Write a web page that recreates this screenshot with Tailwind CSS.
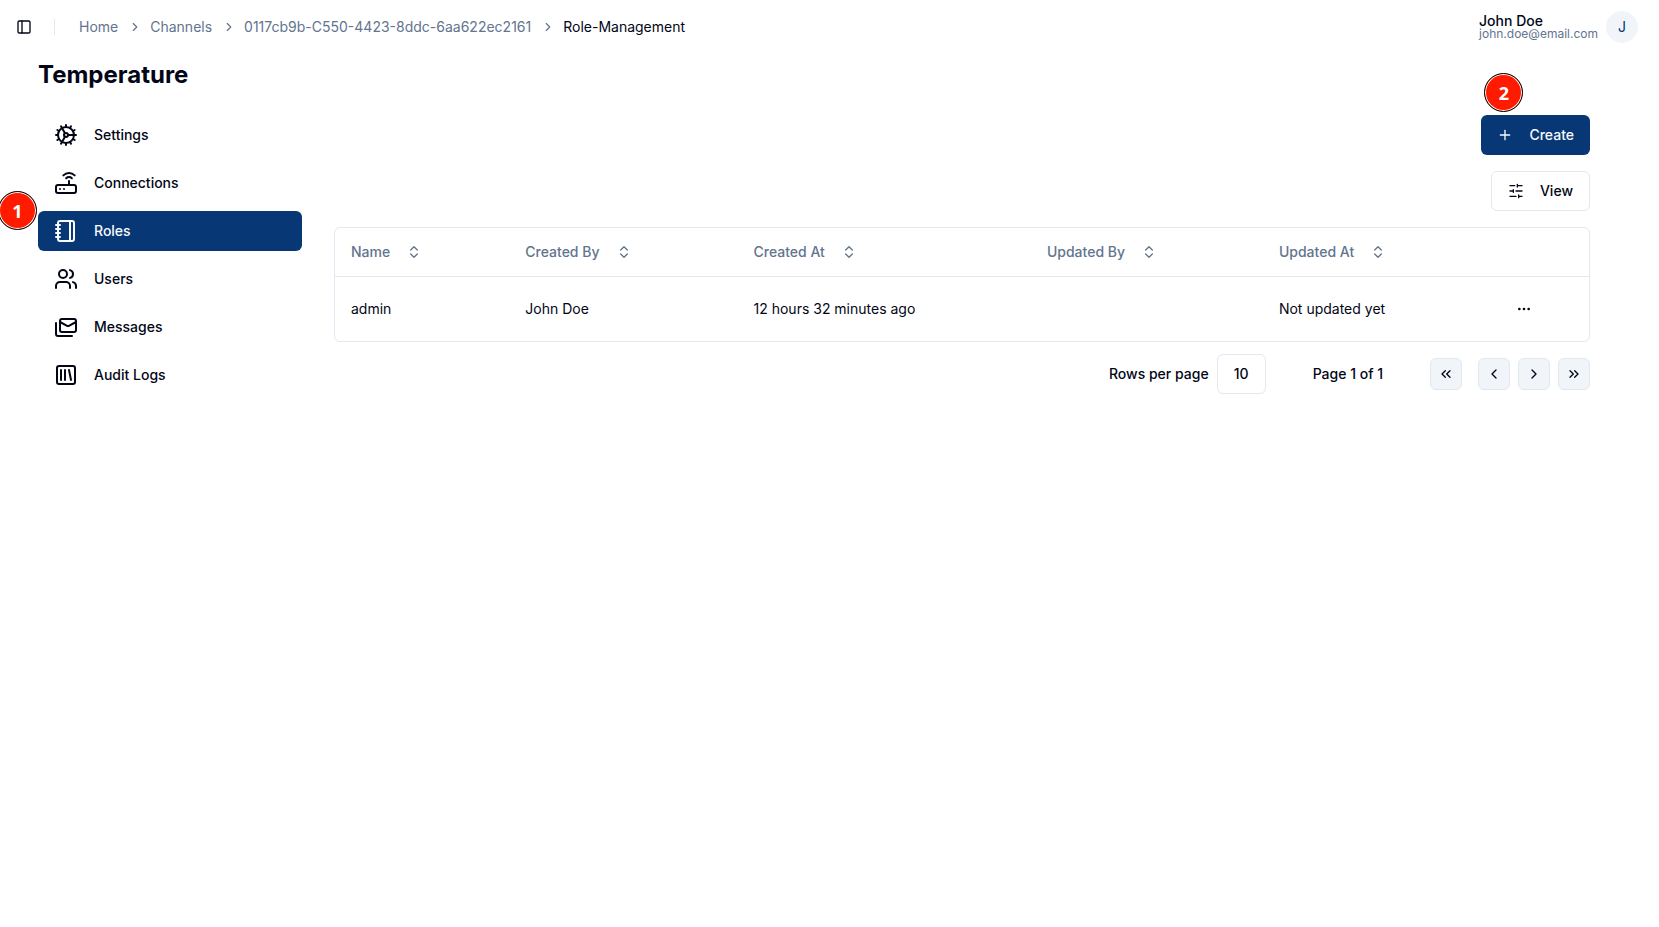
<!DOCTYPE html>
<html lang="en">
<head>
<meta charset="utf-8">
<meta name="viewport" content="width=device-width, initial-scale=1">
<title>Role Management</title>
<script src="https://cdn.jsdelivr.net/npm/@tailwindcss/browser@4"></script>
</head>
<body class="relative min-h-screen bg-white font-['Inter',sans-serif] text-sm text-[#020617]">
<svg class="hidden" xmlns="http://www.w3.org/2000/svg">
  <symbol id="chevron-right" viewBox="0 0 24 24"><path d="m9 18 6-6-6-6"/></symbol>
  <symbol id="sort" viewBox="0 0 24 24"><path d="m7 15 5 5 5-5"/><path d="m7 9 5-5 5 5"/></symbol>
</svg>

<header class="flex h-[54px] items-center justify-between pr-[21px] pl-4">
  <div class="flex items-center">
    <button type="button" aria-label="Toggle sidebar" class="flex size-4 items-center justify-center">
      <svg class="size-4" viewBox="0 0 24 24" fill="none" stroke="currentColor" stroke-width="2" stroke-linecap="round" stroke-linejoin="round"><rect width="18" height="18" x="3" y="3" rx="2"/><path d="M9 3v18"/></svg>
    </button>
    <div class="ml-[22px] h-4 w-px bg-slate-200"></div>
    <nav aria-label="Breadcrumb" class="ml-6">
      <ol class="flex items-center gap-2 text-slate-500">
        <li><a href="#">Home</a></li>
        <li aria-hidden="true" class="pl-0.5"><svg class="size-3.5 fill-none stroke-current stroke-2" stroke-linecap="round" stroke-linejoin="round"><use href="#chevron-right"/></svg></li>
        <li><a href="#">Channels</a></li>
        <li aria-hidden="true" class="pl-0.5"><svg class="size-3.5 fill-none stroke-current stroke-2" stroke-linecap="round" stroke-linejoin="round"><use href="#chevron-right"/></svg></li>
        <li><a href="#">0117cb9b-C550-4423-8ddc-6aa622ec2161</a></li>
        <li aria-hidden="true" class="pl-0.5"><svg class="size-3.5 fill-none stroke-current stroke-2" stroke-linecap="round" stroke-linejoin="round"><use href="#chevron-right"/></svg></li>
        <li class="text-[#020617]" aria-current="page">Role-Management</li>
      </ol>
    </nav>
  </div>
  <div class="flex items-center gap-2">
    <div>
      <p class="text-sm leading-[14px] font-medium">John Doe</p>
      <p class="text-xs leading-3 text-slate-500">john.doe@email.com</p>
    </div>
    <div class="flex size-8 items-center justify-center rounded-full bg-slate-100 text-[#083776]">J</div>
  </div>
</header>

<main class="pr-[69px] pl-[38px]">
  <h1 class="mt-[5px] text-2xl leading-8 font-bold">Temperature</h1>
  <div class="mt-6 flex gap-8">
    <nav aria-label="Channel" class="flex w-[264px] shrink-0 flex-col gap-2 font-medium">
      <a href="#" class="flex h-10 items-center gap-4 rounded-md px-4">
        <svg class="size-6" viewBox="0 0 24 24" fill="none" stroke="currentColor" stroke-width="2" stroke-linecap="round" stroke-linejoin="round"><path d="M12 20a8 8 0 1 0 0-16 8 8 0 0 0 0 16Z"/><path d="M12 14a2 2 0 1 0 0-4 2 2 0 0 0 0 4Z"/><path d="M12 2v2"/><path d="M12 22v-2"/><path d="m17 20.66-1-1.73"/><path d="M11 10.27 7 3.34"/><path d="m20.66 17-1.73-1"/><path d="m3.34 7 1.73 1"/><path d="M14 12h8"/><path d="M2 12h2"/><path d="m20.66 7-1.73 1"/><path d="m3.34 17 1.73-1"/><path d="m17 3.34-1 1.73"/><path d="m11 13.73-4 6.93"/></svg>
        Settings
      </a>
      <a href="#" class="flex h-10 items-center gap-4 rounded-md px-4">
        <svg class="size-6" viewBox="0 0 24 24" fill="none" stroke="currentColor" stroke-width="2" stroke-linecap="round" stroke-linejoin="round"><rect width="20" height="8" x="2" y="14" rx="2"/><path d="M6.01 18H6"/><path d="M10.01 18H10"/><path d="M15 10v4"/><path d="M17.84 7.17a4 4 0 0 0-5.66 0"/><path d="M20.66 4.34a8 8 0 0 0-11.31 0"/></svg>
        Connections
      </a>
      <a href="#" aria-current="page" class="flex h-10 items-center gap-4 rounded-md bg-[#083776] px-4 text-slate-50">
        <svg class="size-6" viewBox="0 0 24 24" fill="none" stroke="currentColor" stroke-width="2" stroke-linecap="round" stroke-linejoin="round"><path d="M2 6h4"/><path d="M2 10h4"/><path d="M2 14h4"/><path d="M2 18h4"/><rect width="16" height="20" x="4" y="2" rx="2"/><path d="M16 2v20"/></svg>
        Roles
      </a>
      <a href="#" class="flex h-10 items-center gap-4 rounded-md px-4">
        <svg class="size-6" viewBox="0 0 24 24" fill="none" stroke="currentColor" stroke-width="2" stroke-linecap="round" stroke-linejoin="round"><path d="M16 21v-2a4 4 0 0 0-4-4H6a4 4 0 0 0-4 4v2"/><circle cx="9" cy="7" r="4"/><path d="M22 21v-2a4 4 0 0 0-3-3.87"/><path d="M16 3.13a4 4 0 0 1 0 7.75"/></svg>
        Users
      </a>
      <a href="#" class="flex h-10 items-center gap-4 rounded-md px-4">
        <svg class="size-6" viewBox="0 0 24 24" fill="none" stroke="currentColor" stroke-width="2" stroke-linecap="round" stroke-linejoin="round"><rect width="16" height="13" x="6" y="4" rx="2"/><path d="m22 7-7.1 3.78c-.57.3-1.23.3-1.8 0L6 7"/><path d="M2 8v11c0 1.1.9 2 2 2h14"/></svg>
        Messages
      </a>
      <a href="#" class="flex h-10 items-center gap-4 rounded-md px-4">
        <svg class="size-6" viewBox="0 0 24 24" fill="none" stroke="currentColor" stroke-width="2" stroke-linecap="round" stroke-linejoin="round"><rect width="18" height="18" x="3" y="3" rx="2"/><path d="M7 7v10"/><path d="M11 7v10"/><path d="m15 7 2 10"/></svg>
        Audit Logs
      </a>
    </nav>

    <section class="flex min-w-0 flex-1 flex-col" aria-label="Roles">
      <div class="flex flex-col items-end gap-4">
        <div class="relative">
          <button type="button" class="flex h-10 items-center gap-4 rounded-md bg-[#083776] px-4 font-medium text-slate-50">
            <svg class="size-4" viewBox="0 0 24 24" fill="none" stroke="currentColor" stroke-width="2" stroke-linecap="round" stroke-linejoin="round"><path d="M5 12h14"/><path d="M12 5v14"/></svg>
            Create
          </button>
          <span class="absolute -top-[42px] left-[3px] flex size-[39px] items-center justify-center rounded-full border border-black bg-[#ff1a00] font-['Open_Sans',sans-serif] text-lg font-bold text-white ring-1 ring-white ring-inset">2</span>
        </div>
        <button type="button" class="flex h-10 items-center gap-4 rounded-md border border-slate-200 px-4 font-medium">
          <svg class="size-4" viewBox="0 0 24 24" fill="none" stroke="currentColor" stroke-width="2" stroke-linecap="round" stroke-linejoin="round"><path d="M21 4h-7M10 4H3M21 12h-9M8 12H3M21 20h-5M12 20H3M14 2v4M8 10v4M16 18v4"/></svg>
          View
        </button>
      </div>

      <div class="mt-4 rounded-md border border-slate-200">
        <table class="w-full table-fixed text-left">
          <colgroup>
            <col class="w-[13.9%]"><col class="w-[18.2%]"><col class="w-[23.4%]"><col class="w-[18.5%]"><col class="w-[18.3%]"><col>
          </colgroup>
          <thead class="border-b border-slate-200 text-slate-500">
            <tr class="h-12">
              <th class="px-4 font-medium"><button type="button" class="flex items-center gap-4">Name<svg class="size-4 fill-none stroke-current stroke-2" stroke-linecap="round" stroke-linejoin="round"><use href="#sort"/></svg></button></th>
              <th class="px-4 font-medium"><button type="button" class="flex items-center gap-4">Created By<svg class="size-4 fill-none stroke-current stroke-2" stroke-linecap="round" stroke-linejoin="round"><use href="#sort"/></svg></button></th>
              <th class="px-4 font-medium"><button type="button" class="flex items-center gap-4">Created At<svg class="size-4 fill-none stroke-current stroke-2" stroke-linecap="round" stroke-linejoin="round"><use href="#sort"/></svg></button></th>
              <th class="px-4 font-medium"><button type="button" class="flex items-center gap-4">Updated By<svg class="size-4 fill-none stroke-current stroke-2" stroke-linecap="round" stroke-linejoin="round"><use href="#sort"/></svg></button></th>
              <th class="px-4 font-medium"><button type="button" class="flex items-center gap-4">Updated At<svg class="size-4 fill-none stroke-current stroke-2" stroke-linecap="round" stroke-linejoin="round"><use href="#sort"/></svg></button></th>
              <th></th>
            </tr>
          </thead>
          <tbody>
            <tr class="h-[65px]">
              <td class="px-4">admin</td>
              <td class="px-4">John Doe</td>
              <td class="px-4">12 hours 32 minutes ago</td>
              <td class="px-4"></td>
              <td class="px-4">Not updated yet</td>
              <td class="px-4"><button type="button" aria-label="Open menu" class="flex size-8 items-center justify-center"><svg class="size-4" viewBox="0 0 24 24" fill="none" stroke="currentColor" stroke-width="2" stroke-linecap="round" stroke-linejoin="round"><circle cx="12" cy="12" r="1"/><circle cx="19" cy="12" r="1"/><circle cx="5" cy="12" r="1"/></svg></button></td>
            </tr>
          </tbody>
        </table>
      </div>

      <div class="mt-3 flex items-center justify-end font-medium">
        <label for="rows">Rows per page</label>
        <select id="rows" class="ml-2 h-10 appearance-none rounded-md border border-slate-200 bg-white px-4"><option>10</option></select>
        <p class="ml-[47px]">Page 1 of 1</p>
        <button type="button" aria-label="First page" class="ml-[47px] flex size-8 items-center justify-center rounded-md border border-slate-200 bg-slate-100"><svg class="size-4" viewBox="0 0 24 24" fill="none" stroke="currentColor" stroke-width="2" stroke-linecap="round" stroke-linejoin="round"><path d="m11 17-5-5 5-5"/><path d="m18 17-5-5 5-5"/></svg></button>
        <button type="button" aria-label="Previous page" class="ml-4 flex size-8 items-center justify-center rounded-md border border-slate-200 bg-slate-100"><svg class="size-4" viewBox="0 0 24 24" fill="none" stroke="currentColor" stroke-width="2" stroke-linecap="round" stroke-linejoin="round"><path d="m15 18-6-6 6-6"/></svg></button>
        <button type="button" aria-label="Next page" class="ml-2 flex size-8 items-center justify-center rounded-md border border-slate-200 bg-slate-100"><svg class="size-4" viewBox="0 0 24 24" fill="none" stroke="currentColor" stroke-width="2" stroke-linecap="round" stroke-linejoin="round"><path d="m9 18 6-6-6-6"/></svg></button>
        <button type="button" aria-label="Last page" class="ml-2 flex size-8 items-center justify-center rounded-md border border-slate-200 bg-slate-100"><svg class="size-4" viewBox="0 0 24 24" fill="none" stroke="currentColor" stroke-width="2" stroke-linecap="round" stroke-linejoin="round"><path d="m6 17 5-5-5-5"/><path d="m13 17 5-5-5-5"/></svg></button>
      </div>
    </section>
  </div>
</main>
<span class="absolute top-[191px] -left-0.5 flex size-[39px] items-center justify-center rounded-full border border-black bg-[#ff1a00] font-['Open_Sans',sans-serif] text-lg font-bold text-white ring-1 ring-white ring-inset">1</span>
</body>
</html>
